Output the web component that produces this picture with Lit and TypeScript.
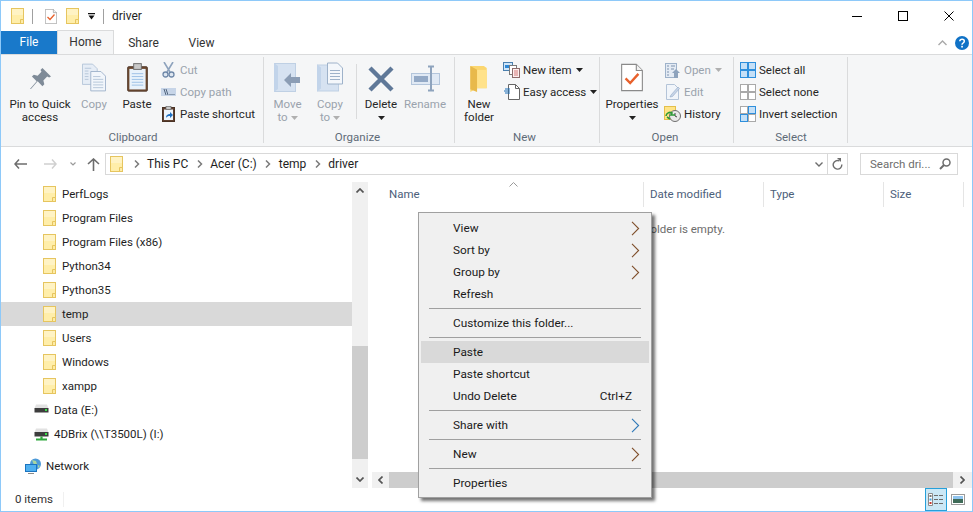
import { LitElement, html, svg, css } from "lit";
import { customElement } from "lit/decorators.js";

const folder = () => html`<svg class="ic" width="13" height="16" viewBox="0 0 13 16"><rect x=".5" y=".5" width="12" height="15" fill="#ffeeaa" stroke="#e6c55f"/><rect x="1" y="1" width="11" height="6" fill="#fff3c4"/><path d="M9.5 15.5v-4h3" fill="#fde9a2" stroke="#e6c55f"/></svg>`;
const check = (w: number, h: number) => html`<svg class="ic" width=${w} height=${h} viewBox="0 0 24 30"><path d="M.7.7h16l6.6 6.6v22H.7z" fill="#fff" stroke="#8a8a8a" stroke-width="1.2"/><path d="M16.7.7v6.6h6.6" fill="#f2f2f2" stroke="#8a8a8a" stroke-width="1.2"/><path d="M5 16l5 5 9-10" fill="none" stroke="#e8612c" stroke-width="2.6"/></svg>`;
const docs = () => html`<svg class="ic" width="24" height="29" viewBox="0 0 26 30"><path d="M.5.5h11l5 5v17H.5z" fill="#e6edf6" stroke="#b4c4d8"/><path d="M9.500 8.500h11l5 5v16h-16z" fill="#f2f6fb" stroke="#9eb2ca"/><path d="M3 5h7M3 8h4M3 11h4M3 14h4M3 17h4M12 14h8M12 17h11M12 20h11M12 23h11M12 26h11" stroke="#b4c4d8"/></svg>`;
const clipboard = () => html`<svg class="ic" width="21" height="29" viewBox="0 0 22 30"><rect x=".7" y="3.700" width="20.600" height="25.600" rx="1" fill="#6e4a30" stroke="#50382a"/><rect x="2.500" y="6" width="17" height="21.500" fill="#e9f2fb"/><path d="M5 11h12M5 14h12M5 17h12M5 20h12M5 23h12" stroke="#9cc0e6"/><rect x="7" y=".5" width="8" height="6" fill="#c9c9c9" stroke="#6a6a6a"/></svg>`;
const pasteShortcut = () => html`<svg class="ic" width="13" height="16" viewBox="0 0 13 16"><rect x=".5" y="1.500" width="12" height="14" fill="#5e4030" stroke="#4a3224"/><rect x="2" y="3.500" width="9" height="10.500" fill="#eef4fb"/><rect x="4" y=".5" width="5" height="3" fill="#c9c9c9" stroke="#6a6a6a" stroke-width=".7"/><path d="M4 12c0-3 1.500-4 4-4V6l3 3-3 3v-2c-2 0-3 .5-4 2z" fill="#1f6fc0"/></svg>`;
const g4 = (c: string[], s: string[]) => html`<svg class="ic" width="16" height="16" viewBox="0 0 16 16">${c.map((f, i) => svg`<rect x=${i % 2 ? 8.5 : 0.5} y=${i < 2 ? 0.5 : 8.5} width="7" height="7" fill=${f} stroke=${s[i]}/>`)}</svg>`;
const submenu = (blue = false) => html`<svg class="ic" width="9" height="15" viewBox="0 0 9 15"><path d="M1 .8l6.600 6.700L1 14.200" fill="none" stroke=${blue ? "#2f79b8" : "#7f4f2b"} stroke-width="1.100"/></svg>`;
const caret = (c = "#222") => html`<svg class="ic" width="7" height="4" viewBox="0 0 7 4"><path d="M0 0h7L3.500 4z" fill=${c}/></svg>`;
const crumb = () => html`<svg class="ic crumb" width="6" height="8" viewBox="0 0 6 8"><path d="M1 .5L4.500 4 1 7.500" fill="none" stroke="#7a7a7a" stroke-width="1.500"/></svg>`;
const drive = (net = false) => html`<svg class="ic" width="15" height="14" viewBox="0 0 15 14"><path d="M2 1.500h11l1.500 4H.5z" fill="#e2e2e2"/><rect x=".5" y="5" width="14" height="4.500" fill="#3d3d3d"/><rect x="11" y="6" width="2" height="2" fill="#3be04a"/>${net ? svg`<path d="M7.500 9.500v2M2 12.500h11" stroke="#2fa83c" stroke-width="2.200"/>` : ""}</svg>`;

const TREE = ["PerfLogs", "Program Files", "Program Files (x86)", "Python34", "Python35", "temp", "Users", "Windows", "xampp"];

@customElement("app-root")
export class AppRoot extends LitElement {
  static styles = css`
    :host { display: block; width: 973px; height: 512px; }
    * { box-sizing: border-box; }
    .win { position: relative; width: 973px; height: 512px; border: 1px solid #8ec9f9; background: #fff; display: flex; flex-direction: column; overflow: hidden;
      font: 11.5px/15px Roboto, "Noto Sans", sans-serif; color: #1e1e1e; }
    .ic { display: block; flex: none; }
    .title { height: 30px; display: flex; align-items: center; padding-left: 10px; flex: none; }
    .vs { width: 1px; height: 15px; background: #a0a0a0; }
    .t1 { margin-left: 8px; } .t2 { margin-left: 12px; } .t3 { margin-left: 9px; } .t4 { margin-left: 9px; } .t5 { margin-left: 8px; }
    .caption { margin-left: 8px; font-size: 12px; }
    .controls { margin-left: auto; display: flex; align-items: center; }
    .ctl { width: 46px; height: 30px; display: flex; align-items: center; justify-content: center; }
    .tabs { height: 24px; display: flex; flex: none; border-bottom: 1px solid #dadbdc; position: relative; font-size: 12px; }
    .tab { height: 24px; display: flex; align-items: center; justify-content: center; width: 57px; color: #333; }
    .tab.file { width: 56px; height: 23px; background: #1979ca; color: #fff; }
    .tab.home { border: 1px solid #dadbdc; border-bottom: none; background: #f5f6f7; height: 24px; margin-top: -1px; }
    .tab.share { width: 59px; }
    .tabs-right { margin-left: auto; display: flex; align-items: center; gap: 8px; padding-right: 3px; }
    .help { width: 14px; height: 14px; }
    .ribbon { height: 92px; flex: none; background: #f5f6f7; border-bottom: 1px solid #dadbdc; display: flex; padding-top: 2px; color: #262626; }
    .group { height: 86px; border-right: 1px solid #dadbdc; display: flex; flex-direction: column; flex: none; }
    .g-clip { width: 263px; padding-left: 7px; } .g-org { width: 191px; padding-left: 2px; } .g-new { width: 145px; }
    .g-open { width: 134px; padding-left: 2px; } .g-sel { width: 114px; padding-left: 6px; }
    .items { flex: 1; display: flex; }
    .glabel { height: 16px; line-height: 20px; text-align: center; color: #5f6b78; margin-left: -5px; flex: none; }
    .big { display: flex; flex-direction: column; align-items: center; padding-top: 6px; line-height: 13px; text-align: center; flex: none; }
    .big .bi { height: 35px; display: flex; align-items: flex-start; justify-content: center; width: 100%; }
    .big .drop { display: flex; justify-content: center; margin-top: 5px; }
    .big .to { display: flex; align-items: center; justify-content: center; gap: 3px; }
    .off { color: #9aa3ad; }
    .w64 { width: 64px; } .w44 { width: 44px; } .w42 { width: 42px; } .w43 { width: 43px; } .w46 { width: 46px; } .w48 { width: 48px; } .w60 { width: 60px; }
    .m5 { margin-top: 5px; } .m3 { margin-top: 3px; } .m2 { margin-top: 2px; } .mn1 { margin-top: -1px; }
    .vsep { width: 1px; height: 55px; background: #dadbdc; margin: 7px 1px 0 5px; flex: none; }
    .col { display: flex; flex-direction: column; padding-top: 2px; }
    .small { height: 22px; display: flex; align-items: center; gap: 3px; white-space: nowrap; }
    .small .c { width: 17px; display: flex; justify-content: center; flex: none; }
    .small .cr { margin-left: 1px; }
    .col-clip { margin-left: 2px; } .col-open { margin-left: 2px; }
    .nav { height: 34px; flex: none; display: flex; align-items: center; padding-left: 12px; position: relative; }
    .nb { display: flex; justify-content: center; align-items: center; flex: none; }
    .n1 { width: 15px; } .n2 { width: 15px; margin-left: 15px; } .n3 { width: 7px; margin-left: 11px; } .n4 { width: 13px; margin-left: 11px; }
    .addr { margin-left: 5px; width: 743px; height: 22px; border: 1px solid #d9d9d9; display: flex; align-items: center; padding-left: 4px; font-size: 12px; }
    .addr > .ic:first-child { margin-right: 2px; }
    .addr .crumb { margin-left: 8.5px; margin-right: 7.5px; }
    .addr .end { margin-left: auto; display: flex; align-items: center; height: 100%; }
    .addr .dd { width: 17px; display: flex; justify-content: center; }
    .addr .rf { width: 20px; height: 100%; border-left: 1px solid #d9d9d9; display: flex; align-items: center; justify-content: center; }
    .search { margin-left: 12px; width: 98px; height: 22px; border: 1px solid #d9d9d9; display: flex; align-items: center; justify-content: space-between; padding: 0 6px 0 9px; color: #6d6d6d; }
    .main { flex: 1; display: flex; margin-top: 1px; min-height: 0; }
    .tree { width: 351px; flex: none; }
    .row { height: 24px; display: flex; align-items: center; gap: 6px; padding-left: 42px; }
    .row.sel { background: #d9d9d9; }
    .row.drive { padding-left: 33px; gap: 5px; }
    .row.network { margin-top: 8px; padding-left: 24px; gap: 4px; }
    .vbar { width: 16px; flex: none; background: #f0f0f0; display: flex; flex-direction: column; }
    .arrow { height: 17px; display: flex; align-items: center; justify-content: center; flex: none; }
    .thumb { background: #cdcdcd; }
    .vthumb { height: 113px; margin-top: 147px; }
    .vfill { flex: 1; }
    .content { flex: 1; margin-left: 4px; display: flex; flex-direction: column; min-width: 0; }
    .head { height: 26px; display: flex; flex: none; color: #4c607a; }
    .hc { border-right: 1px solid #e5e5e5; padding: 5px 0 0 6px; flex: none; height: 25px; position: relative; }
    .hname { width: 272px; padding-left: 17px; } .hw { width: 120px; } .hlast { width: 80px; }
    .sort { position: absolute; left: 137px; top: 0; }
    .empty { flex: 1; width: 353px; text-align: right; padding-top: 14px; color: #6d6d6d; }
    .hbar { height: 16px; flex: none; background: #f0f0f0; display: flex; }
    .harrow { width: 17px; display: flex; align-items: center; justify-content: center; flex: none; }
    .hthumb { width: 564px; flex: none; }
    .harrow.right { width: 18px; }
    .status { height: 23px; flex: none; display: flex; align-items: center; padding-left: 14px; color: #333; }
    .ssep { width: 1px; height: 15px; background: #f0f0f0; margin-left: 10px; }
    .vbtn { margin-left: auto; width: 22px; height: 23px; border: 1px solid #26a0da; background: #cbe8f6; display: flex; align-items: center; justify-content: center; }
    .vbtn2 { margin: 0 7px 0 4px; }
    .menu { position: absolute; left: 417px; top: 211px; width: 234px; height: 286px; background: #f0f0f0; border: 1px solid #a0a0a0; box-shadow: 3px 3px 3px rgba(0,0,0,.55); padding: 4px 2px; color: #1a1a1a; z-index: 2; font-size: 11.8px; }
    .mi { height: 22px; display: flex; align-items: center; padding: 0 9px 0 32px; justify-content: space-between; }
    .mi.hot { background: #d9d9d9; }
    .mi .sc { margin-right: 8px; }
    .ms { height: 7px; padding: 3px 8px 3px 8px; }
    .ms::after { content: ""; display: block; height: 1px; background: #a0a0a0; }
  `;

  render() {
    return html`<div class="win">
      <div class="title">
        ${folder()}<div class="vs t1"></div>
        <div class="t2">${check(12, 15)}</div>
        <div class="t3">${folder()}</div>
        <div class="t4"><svg class="ic" width="7" height="7" viewBox="0 0 7 7"><path d="M0 0h7v1.200H0zM.5 2.500h6L3.500 6.500z" fill="#111"/></svg></div>
        <div class="vs t5"></div>
        <span class="caption">driver</span>
        <div class="controls">
          <div class="ctl"><svg class="ic" width="10" height="1"><rect width="10" height="1" fill="#000"/></svg></div>
          <div class="ctl"><svg class="ic" width="10" height="10"><rect x=".5" y=".5" width="9" height="9" fill="none" stroke="#000"/></svg></div>
          <div class="ctl"><svg class="ic" width="10" height="10"><path d="M.5.5l9 9M9.500.5l-9 9" stroke="#000"/></svg></div>
        </div>
      </div>
      <div class="tabs">
        <div class="tab file">File</div>
        <div class="tab home">Home</div>
        <div class="tab share">Share</div>
        <div class="tab">View</div>
        <div class="tabs-right">
          <svg class="ic" width="9" height="6" viewBox="0 0 9 6"><path d="M.5 5l4-4 4 4" fill="none" stroke="#a9a9a9" stroke-width="1.400"/></svg>
          <svg class="ic help" viewBox="0 0 14 14"><circle cx="7" cy="7" r="7" fill="#1072c6"/><path d="M4.800 5.300c.2-2.600 4.500-2.600 4.500 0 0 1.700-2.300 1.700-2.300 3.400" fill="none" stroke="#fff" stroke-width="1.500"/><rect x="6.200" y="9.800" width="1.700" height="1.700" fill="#fff"/></svg>
        </div>
      </div>
      <div class="ribbon">
        <div class="group g-clip">
          <div class="items">
            <div class="big w64"><div class="bi"><svg class="ic m5" width="21" height="21" viewBox="0 0 22 22"><path d="M13 0l9 9-2 1-2-1-4 4 1 4-2 2-5-5-7 8H0l7-8-5-5 2-2 4 1 4-4-1-2z" fill="#7f8b98"/></svg></div>Pin to Quick<br/>access</div>
            <div class="big w44 off"><div class="bi">${docs()}</div>Copy</div>
            <div class="big w42"><div class="bi">${clipboard()}</div>Paste</div>
            <div class="col col-clip">
              <div class="small off"><span class="c"><svg class="ic" width="13" height="16" viewBox="0 0 13 16"><path d="M2 0l6 10M11 0L5 10" stroke="#8ea3bd" stroke-width="1.600" fill="none"/><circle cx="3.500" cy="12.500" r="2.500" fill="#dfe7f1" stroke="#6f88a8" stroke-width="1.300"/><circle cx="9.500" cy="12.500" r="2.500" fill="#dfe7f1" stroke="#6f88a8" stroke-width="1.300"/></svg></span>Cut</div>
              <div class="small off"><span class="c"><svg class="ic" width="15" height="8" viewBox="0 0 15 8"><rect width="15" height="8" fill="#c7d5e8"/><path d="M3 1l2 6M5 1l2 6M8.500 6.500h1M10.500 6.500h1M12.500 6.500h1" stroke="#44576f" stroke-width=".9"/></svg></span>Copy path</div>
              <div class="small"><span class="c">${pasteShortcut()}</span>Paste shortcut</div>
            </div>
          </div>
          <div class="glabel">Clipboard</div>
        </div>
        <div class="group g-org">
          <div class="items">
            <div class="big w43 off"><div class="bi"><svg class="ic" width="27" height="29" viewBox="0 0 27 29"><rect x=".5" y=".5" width="21" height="28" fill="#d6e2f1" stroke="#bfd0e4"/><path d="M0 0l4 3v23l-4 3z" fill="#c2d4ea"/><path d="M10 17l7-7v4h9v6h-9v4z" fill="#8b9db5"/></svg></div>Move<div class="to">to ${caret("#b0b0b0")}</div></div>
            <div class="big w42 off"><div class="bi"><svg class="ic mn1" width="26" height="30" viewBox="0 0 26 29"><rect x=".5" y="2.500" width="21" height="26" fill="#d6e2f1" stroke="#bfd0e4"/><path d="M0 2l4 3v21l-4 3z" fill="#c2d4ea"/><path d="M10.500.5h10l5 5v16h-15z" fill="#f4f7fb" stroke="#9eb2ca"/><path d="M13 8h10M13 11h10M13 14h10M13 17h10" stroke="#9eb2ca"/></svg></div>Copy<div class="to">to ${caret("#b0b0b0")}</div></div>
            <div class="vsep"></div>
            <div class="big w46"><div class="bi"><svg class="ic m3" width="26" height="26" viewBox="0 0 26 26"><path d="M2 2l22 22M24 2L2 24" stroke="#5f7898" stroke-width="4.400"/></svg></div>Delete<div class="drop">${caret()}</div></div>
            <div class="big w42 off"><div class="bi"><svg class="ic m2" width="29" height="27" viewBox="0 0 29 27"><rect x=".5" y="8.500" width="28" height="11" fill="#e0e9f4" stroke="#b3c5db"/><rect x="3" y="11" width="14" height="6" fill="#93a9c6"/><path d="M17 1.500h6M20 1.500v24M17 25.500h6" stroke="#8ea3bd" stroke-width="2" fill="none"/></svg></div>Rename</div>
          </div>
          <div class="glabel">Organize</div>
        </div>
        <div class="group g-new">
          <div class="items">
            <div class="big w48"><div class="bi"><svg class="ic m3" width="19" height="27" viewBox="0 0 19 28"><path d="M0 0h14l3 2v21H7l-7 4z" fill="#fbd66f"/><path d="M0 0l7 4v23l-7-3z" fill="#e8b94b"/><path d="M7 4h10v19H7z" fill="#ffe28a"/></svg></div>New<br/>folder</div>
            <div class="col">
              <div class="small"><span class="c"><svg class="ic" width="17" height="16" viewBox="0 0 17 16"><rect x=".5" y=".5" width="9" height="8" fill="#cfe6fa" stroke="#4a7fae"/><rect x="2" y="3" width="4" height="3" fill="#2e88d6"/><rect x="6.500" y="3.500" width="7" height="9" fill="#fff" stroke="#7a7a7a"/><rect x="9.500" y="6.500" width="7" height="9" fill="#fdeeee" stroke="#8d6b6b"/><path d="M11 9h4M11 11h4M11 13h4" stroke="#d47a7a"/></svg></span>New item <span class="cr">${caret()}</span></div>
              <div class="small"><span class="c"><svg class="ic" width="16" height="16" viewBox="0 0 16 16"><path d="M4.500.5h7l4 4v11h-11z" fill="#fff" stroke="#666"/><path d="M11.500.5v4h4" fill="none" stroke="#666"/><path d="M1 5h5M0 7h6M1 9h5" stroke="#1a6fb8"/></svg></span>Easy access <span class="cr">${caret()}</span></div>
            </div>
          </div>
          <div class="glabel">New</div>
        </div>
        <div class="group g-open">
          <div class="items">
            <div class="big w60"><div class="bi">${check(22, 29)}</div>Properties<div class="drop">${caret()}</div></div>
            <div class="col col-open">
              <div class="small off"><span class="c"><svg class="ic" width="15" height="15" viewBox="0 0 15 15"><rect x=".5" y=".5" width="11" height="14" fill="#e4ebf4" stroke="#9eb2ca"/><path d="M2 3h2M2 6h2M2 9h2M2 12h2M6 3h4M6 6h3" stroke="#7f93ad" stroke-width="1.200"/><path d="M11 6l4 4h-2v5h-4v-5H7z" fill="#8ea3bd"/></svg></span>Open <span class="cr">${caret("#b0b0b0")}</span></div>
              <div class="small off"><span class="c"><svg class="ic" width="14" height="16" viewBox="0 0 14 16"><path d="M.5.5h8l4 4v11H.5z" fill="#f1f5fa" stroke="#b4c4d8"/><path d="M5 11l7-8 1.500 1.500-7 8L4 13z" fill="#c7d5e8" stroke="#93a9c6" stroke-width=".6"/></svg></span>Edit</div>
              <div class="small"><span class="c"><svg class="ic" width="17" height="16" viewBox="0 0 17 16"><rect x=".5" y=".5" width="11" height="13" fill="#ffe487" stroke="#e3bf4b"/><circle cx="11" cy="10" r="5.500" fill="#e9e9e9" stroke="#6e6e6e"/><path d="M11 7v3l2 1" stroke="#444" fill="none"/><path d="M2 10a4 4 0 0 1 6-3l-1 2h4M3 11l3 2" stroke="#2d9a36" stroke-width="1.600" fill="none"/></svg></span>History</div>
            </div>
          </div>
          <div class="glabel">Open</div>
        </div>
        <div class="group g-sel">
          <div class="items">
            <div class="col">
              <div class="small">${g4(["#c5e0f7", "#c5e0f7", "#c5e0f7", "#c5e0f7"], ["#2e8fdc", "#2e8fdc", "#2e8fdc", "#2e8fdc"])}Select all</div>
              <div class="small">${g4(["#fff", "#fff", "#fff", "#fff"], ["#a9a9a9", "#a9a9a9", "#a9a9a9", "#a9a9a9"])}Select none</div>
              <div class="small">${g4(["#fff", "#c5e0f7", "#c5e0f7", "#fff"], ["#a9a9a9", "#2e8fdc", "#2e8fdc", "#a9a9a9"])}Invert selection</div>
            </div>
          </div>
          <div class="glabel">Select</div>
        </div>
      </div>
      <div class="nav">
        <div class="nb n1"><svg class="ic" width="13" height="10" viewBox="0 0 13 10"><path d="M5 .5L1 5l4 4.500M1 5h12" fill="none" stroke="#6d6d6d" stroke-width="1.500"/></svg></div>
        <div class="nb n2"><svg class="ic" width="13" height="10" viewBox="0 0 13 10"><path d="M8 .5L12 5 8 9.500M12 5H0" fill="none" stroke="#d0d0d0" stroke-width="1.500"/></svg></div>
        <div class="nb n3"><svg class="ic" width="6" height="4" viewBox="0 0 6 4"><path d="M.5.5L3 3 5.500.5" fill="none" stroke="#9a9a9a" stroke-width="1.200"/></svg></div>
        <div class="nb n4"><svg class="ic" width="13" height="13" viewBox="0 0 13 13"><path d="M1 6l5.500-5L12 6M6.500 1v12" fill="none" stroke="#6d6d6d" stroke-width="1.600"/></svg></div>
        <div class="addr">
          ${folder()}${crumb()}<span>This PC</span>${crumb()}<span>Acer (C:)</span>${crumb()}<span>temp</span>${crumb()}<span>driver</span>
          <div class="end">
            <div class="dd"><svg class="ic" width="8" height="5" viewBox="0 0 8 5"><path d="M.5.5L4 4 7.500.5" fill="none" stroke="#6d6d6d" stroke-width="1.400"/></svg></div>
            <div class="rf"><svg class="ic" width="11" height="12" viewBox="0 0 11 12"><path d="M7.500 3A4.300 4.300 0 1 0 9.800 6.500" fill="none" stroke="#6d6d6d" stroke-width="1.400"/><path d="M5 0h4v4z" fill="#6d6d6d"/></svg></div>
          </div>
        </div>
        <div class="search"><span>Search dri...</span><svg class="ic" width="12" height="12" viewBox="0 0 12 12"><circle cx="7.500" cy="4.500" r="3.500" fill="none" stroke="#6d6d6d" stroke-width="1.500"/><path d="M5 7l-4 4" stroke="#6d6d6d" stroke-width="2"/></svg></div>
      </div>
      <div class="main">
        <div class="tree">
          ${TREE.map((n) => html`<div class="row ${n === "temp" ? "sel" : ""}">${folder()}<span>${n}</span></div>`)}
          <div class="row drive">${drive()}<span>Data (E:)</span></div>
          <div class="row drive">${drive(true)}<span>4DBrix (\\\\T3500L) (I:)</span></div>
          <div class="row network"><svg class="ic" width="17" height="16" viewBox="0 0 17 16"><circle cx="10.500" cy="6" r="5.500" fill="#4d9ad8"/><path d="M7 2l4 1 1 3-3 1zM13 7l2 1-2 2z" fill="#a9d6a0"/><rect x=".5" y="6.500" width="11" height="7" fill="#4fb0f0" stroke="#1b74c0"/><path d="M3 15.500h6" stroke="#8a8a8a"/></svg><span>Network</span></div>
        </div>
        <div class="vbar">
          <div class="arrow"><svg class="ic" width="8" height="5" viewBox="0 0 8 5"><path d="M.5 4.500L4 1l3.500 3.500" fill="none" stroke="#555" stroke-width="1.700"/></svg></div>
          <div class="thumb vthumb"></div>
          <div class="vfill"></div>
          <div class="arrow"><svg class="ic" width="8" height="5" viewBox="0 0 8 5"><path d="M.5.500L4 4 7.500.500" fill="none" stroke="#555" stroke-width="1.700"/></svg></div>
        </div>
        <div class="content">
          <div class="head">
            <div class="hc hname">Name<svg class="ic sort" width="9" height="5" viewBox="0 0 9 5"><path d="M.5 4.500l4-4 4 4" fill="none" stroke="#9a9a9a"/></svg></div>
            <div class="hc hw">Date modified</div>
            <div class="hc hw">Type</div>
            <div class="hc hlast">Size</div>
          </div>
          <div class="empty">This folder is empty.</div>
          <div class="hbar">
            <div class="harrow"><svg class="ic" width="5" height="8" viewBox="0 0 5 8"><path d="M4.500.5L1 4l3.500 3.500" fill="none" stroke="#555" stroke-width="1.700"/></svg></div>
            <div class="thumb hthumb"></div>
            <div class="harrow right"><svg class="ic" width="5" height="8" viewBox="0 0 5 8"><path d="M.5.5L4 4 .5 7.500" fill="none" stroke="#555" stroke-width="1.700"/></svg></div>
          </div>
        </div>
      </div>
      <div class="status">
        <span>0 items</span><div class="ssep"></div>
        <div class="vbtn"><svg class="ic" width="16" height="13" viewBox="0 0 16 13"><path d="M.5.500h4v12h-4z" fill="#fff" stroke="#8a8a8a"/><rect x="1.500" y="2" width="2" height="2" fill="#777"/><rect x="1.500" y="5.500" width="2" height="2" fill="#3a9fe0"/><rect x="1.500" y="9" width="2" height="2" fill="#c8382e"/><path d="M6 2.500h4M11 2.500h4M6 6.500h4M11 6.500h4M6 10.500h4M11 10.500h4" stroke="#6d6d6d"/></svg></div>
        <div class="vbtn2"><svg class="ic" width="14" height="11" viewBox="0 0 14 11"><rect x=".5" y=".5" width="13" height="10" fill="#fff" stroke="#9a9a9a"/><rect x="2" y="2" width="10" height="3" fill="#8fc4ef"/><rect x="2" y="5" width="10" height="4" fill="#3f6b58"/></svg></div>
      </div>
      <div class="menu">
        <div class="mi"><span>View</span>${submenu()}</div>
        <div class="mi"><span>Sort by</span>${submenu()}</div>
        <div class="mi"><span>Group by</span>${submenu()}</div>
        <div class="mi"><span>Refresh</span></div>
        <div class="ms"></div>
        <div class="mi"><span>Customize this folder...</span></div>
        <div class="ms"></div>
        <div class="mi hot"><span>Paste</span></div>
        <div class="mi"><span>Paste shortcut</span></div>
        <div class="mi"><span>Undo Delete</span><span class="sc">Ctrl+Z</span></div>
        <div class="ms"></div>
        <div class="mi"><span>Share with</span>${submenu(true)}</div>
        <div class="ms"></div>
        <div class="mi"><span>New</span>${submenu()}</div>
        <div class="ms"></div>
        <div class="mi"><span>Properties</span></div>
      </div>
    </div>`;
  }
}
